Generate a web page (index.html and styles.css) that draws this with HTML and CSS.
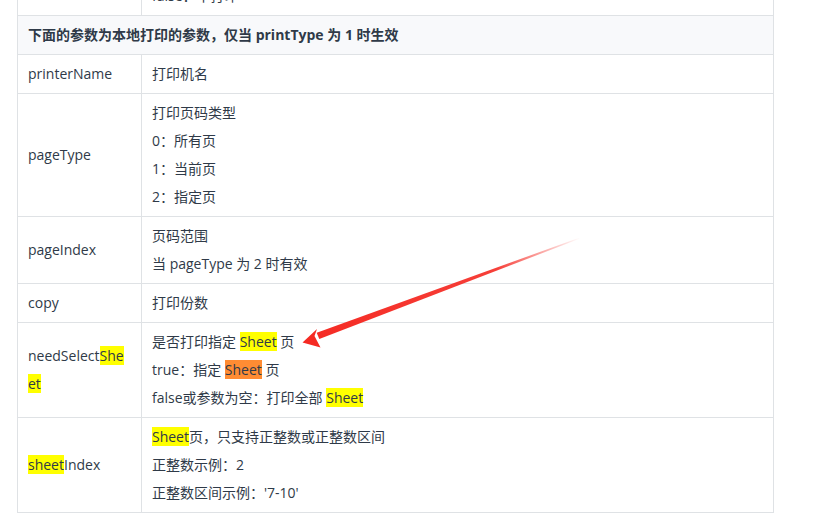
FILE: index.html
```html
<!DOCTYPE html>
<html lang="zh-CN">
<head>
<meta charset="utf-8">
<title>参数</title>
<link rel="stylesheet" href="styles.css">
</head>
<body>
<div class="page">
  <table class="params">
    <colgroup><col class="c1"><col class="c2"></colgroup>
    <tr>
      <td class="key"></td>
      <td class="val">false：不打印</td>
    </tr>
    <tr class="section">
      <td colspan="2">下面的参数为本地打印的参数，仅当 printType 为 1 时生效</td>
    </tr>
    <tr>
      <td class="key">printerName</td>
      <td class="val">打印机名</td>
    </tr>
    <tr>
      <td class="key">pageType</td>
      <td class="val"><div>打印页码类型</div><div>0：所有页</div><div>1：当前页</div><div>2：指定页</div></td>
    </tr>
    <tr>
      <td class="key">pageIndex</td>
      <td class="val"><div>页码范围</div><div>当 pageType 为 2 时有效</div></td>
    </tr>
    <tr>
      <td class="key">copy</td>
      <td class="val">打印份数</td>
    </tr>
    <tr>
      <td class="key">needSelect<mark>Sheet</mark></td>
      <td class="val"><div>是否打印指定 <mark>Sheet</mark> 页</div><div>true：指定 <mark class="cur">Sheet</mark> 页</div><div>false或参数为空：打印全部 <mark>Sheet</mark></div></td>
    </tr>
    <tr>
      <td class="key"><mark>sheet</mark>Index</td>
      <td class="val"><div><mark>Sheet</mark>页，只支持正整数或正整数区间</div><div>正整数示例：2</div><div>正整数区间示例：'7-10'</div></td>
    </tr>
  </table>
  <svg class="arrow" width="823" height="515" viewBox="0 0 823 515">
    <defs>
      <linearGradient id="ag" gradientUnits="userSpaceOnUse" x1="580" y1="238" x2="303" y2="342">
        <stop offset="0" stop-color="#f52a23" stop-opacity="0"/>
        <stop offset="0.3" stop-color="#f52a23" stop-opacity="0.9"/>
        <stop offset="1" stop-color="#f52a23"/>
      </linearGradient>
    </defs>
    <polygon points="579.8,237.5 580.2,238.5 319.3,339 316.7,332.8" fill="url(#ag)"/>
    <polygon points="302.5,342.5 317,329 314.5,336 320.5,347.5" fill="#f52a23"/>
  </svg>
</div>
</body>
</html>
```

FILE: styles.css
```css
html, body {
  margin: 0;
  padding: 0;
  background: #ffffff;
}
.page {
  position: relative;
  width: 823px;
  height: 515px;
  overflow: hidden;
}
.params {
  margin: -24px 0 0 17px;
  border-collapse: collapse;
  width: 757px;
  table-layout: fixed;
  font-family: "Open Sans", "Noto Sans CJK SC", sans-serif;
  font-size: 14px;
  color: #2f3a48;
}
.c1 { width: 124px; }
.params td {
  border: 1px solid #dfe2e5;
  padding: 5px 10px;
  line-height: 28px;
  vertical-align: middle;
}
.params td.key {
  word-break: break-all;
}
.section td {
  background: #f8f9fb;
  font-weight: 700;
}
mark {
  background: #ffff00;
  color: inherit;
}
mark.cur {
  background: #ff8c33;
}
.arrow {
  position: absolute;
  left: 0;
  top: 0;
  pointer-events: none;
}
```
